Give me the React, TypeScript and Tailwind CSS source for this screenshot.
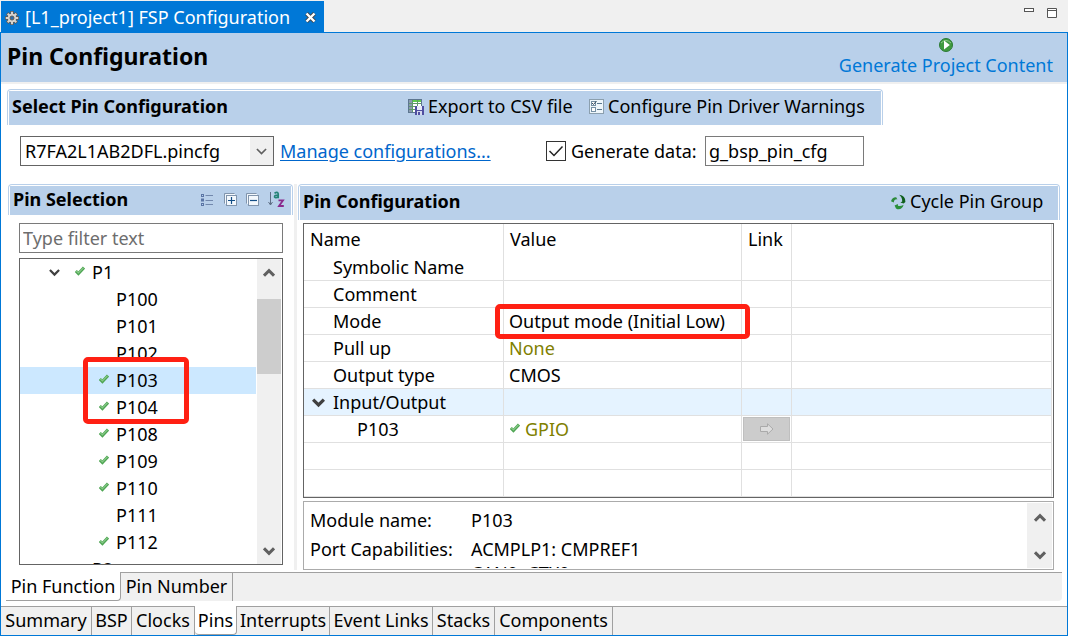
import type { ReactNode } from 'react'

const pins = [
  { name: 'P100', used: false },
  { name: 'P101', used: false },
  { name: 'P102', used: false },
  { name: 'P103', used: true, selected: true },
  { name: 'P104', used: true },
  { name: 'P108', used: true },
  { name: 'P109', used: true },
  { name: 'P110', used: true },
  { name: 'P111', used: false },
  { name: 'P112', used: true },
]

const settings = [
  { name: 'Symbolic Name', value: '' },
  { name: 'Comment', value: '' },
  { name: 'Mode', value: 'Output mode (Initial Low)', marked: true },
  { name: 'Pull up', value: 'None', muted: true },
  { name: 'Output type', value: 'CMOS' },
]

const pageTabs = [
  { name: 'Summary', width: 'w-[91px]' },
  { name: 'BSP', width: 'w-10' },
  { name: 'Clocks', width: 'w-[63px]' },
  { name: 'Pins', width: 'w-[42px]', active: true },
  { name: 'Interrupts', width: 'w-[93px]' },
  { name: 'Event Links', width: 'w-[103px]' },
  { name: 'Stacks', width: 'w-[62px]' },
  { name: 'Components', width: 'w-[118px]' },
]

function Check() {
  return (
    <svg width="10" height="12" viewBox="0 0 10 12" className="shrink-0">
      <path d="M0.8 5 L3.4 7.6 L9 1.6" fill="none" stroke="#4ea553" strokeWidth="3" />
      <path d="M1.2 4.8 L3.4 6.9 L8.6 1.6" fill="none" stroke="#86c886" strokeWidth="1.2" />
    </svg>
  )
}

function Chevron({ up = false, size = 12, color = '#606060', stroke = 3 }) {
  return (
    <svg width={size} height={size} viewBox="0 0 12 12" className="shrink-0">
      <path d={up ? 'M1 8.7 L6 3.7 L11 8.7' : 'M1 3.3 L6 8.3 L11 3.3'} fill="none" stroke={color} strokeWidth={stroke} />
    </svg>
  )
}

function Gear() {
  return (
    <svg width="14" height="14" viewBox="0 0 14 14" className="shrink-0">
      <g stroke="#5f5a55" strokeWidth="3.4">
        <path d="M7 0V14M0 7H14M2.2 2.2L11.8 11.8M11.8 2.2L2.2 11.8" />
      </g>
      <circle cx="7" cy="7" r="5" fill="#5f5a55" />
      <g stroke="#d8d4cf" strokeWidth="2">
        <path d="M7 0.8V13.2M0.8 7H13.2M2.7 2.7L11.3 11.3M11.3 2.7L2.7 11.3" />
      </g>
      <circle cx="7" cy="7" r="4.2" fill="#d8d4cf" />
      <circle cx="7" cy="7" r="2" fill="#2a6fae" stroke="#5f5a55" />
    </svg>
  )
}

function CsvIcon() {
  return (
    <svg width="16" height="16" viewBox="0 0 16 16" className="shrink-0">
      <rect x="0.5" y="0.5" width="13" height="13" fill="#fff" stroke="#5d7690" />
      <rect x="1" y="1" width="12" height="2" fill="#5ecb4c" />
      <rect x="1" y="1" width="3" height="12" fill="#8a9ab0" />
      <path d="M1 4.5H13M1 7.5H13M1 10.5H13M4.5 1V13M9.5 1V13" stroke="#5f9a6a" />
      <rect x="7" y="7" width="9" height="9" fill="#4f4fa0" />
      <rect x="9" y="7" width="5" height="4" fill="#e8ebf8" />
      <rect x="9" y="12" width="5" height="4" fill="#d5d9ee" />
      <rect x="10" y="13" width="2" height="3" fill="#4f4fa0" />
    </svg>
  )
}

function WarningsIcon() {
  return (
    <svg width="15" height="15" viewBox="0 0 15 15" className="shrink-0">
      <rect x="0.5" y="0.5" width="14" height="14" fill="#eef6fb" stroke="#8b9fae" />
      <rect x="2.5" y="2.5" width="4" height="4" fill="#fff" stroke="#7590a5" />
      <rect x="2.5" y="8.5" width="4" height="4" fill="#fff" stroke="#7590a5" />
      <path d="M3 4L4.5 5.5L7.5 2" fill="none" stroke="#30485c" />
      <path d="M8 4.5H13M8 10.5H13" stroke="#5a7890" />
    </svg>
  )
}

function ListIcon() {
  return (
    <svg width="12" height="12" viewBox="0 0 12 12">
      <path d="M4.5 1.5H12M4.5 6.5H12M4.5 10.5H12" stroke="#7288ad" />
      <g fill="#b9d0ea" stroke="#5b75a5">
        <rect x="0.5" y="0.5" width="2" height="2" />
        <rect x="0.5" y="5" width="2" height="2" />
        <rect x="0.5" y="9.5" width="2" height="2" />
      </g>
    </svg>
  )
}

function ExpandIcon({ plus = false }) {
  return (
    <svg width="13" height="13" viewBox="0 0 13 13">
      <path d="M0.5 10.5V0.5H10.5" fill="none" stroke="#8195ad" />
      <path d="M1.5 11V1.5H11" fill="none" stroke="#f3f8fd" />
      <rect x="2.5" y="2.5" width="10" height="10" fill="#f3f8fd" stroke="#8195ad" />
      <path d={plus ? 'M4 7.5H11M7.5 4V11' : 'M4 7.5H11'} stroke="#144f87" strokeWidth="1.2" />
    </svg>
  )
}

function SortIcon() {
  return (
    <svg width="17" height="17" viewBox="0 0 17 17">
      <path d="M2.5 1V14M0.5 11L2.5 14L4.5 11" fill="none" stroke="#5f6f85" />
      <path d="M6.5 2.2Q9.8 0.2 10.2 2.8V7.2M10 4Q6.2 4 6.6 6Q7.6 7.6 10 5.8" fill="none" stroke="#238377" strokeWidth="1.7" />
      <path d="M10.5 9.3H15L11 15H15.8" fill="none" stroke="#8a2b8d" strokeWidth="1.8" />
    </svg>
  )
}

function CycleIcon() {
  return (
    <svg width="15" height="16" viewBox="0 0 15 16" className="shrink-0">
      <path d="M0 7.2Q1.2 3 5.2 3.2L6.4 5.4Q3 5 2.8 8.6Z" fill="#2c8a3a" />
      <path d="M8.2 0.8Q14.6 1.6 14.4 8L12.6 9.6L9.4 8.6L11.2 7.4Q11.4 3.6 8.2 0.8Z" fill="#0f5f1c" />
      <path d="M3.6 11.4L6.8 10L7 11.8Q9.6 12.6 12.6 10.8Q11.4 15.8 6.4 15.2L5 14.6Z" fill="#2a8f3a" />
    </svg>
  )
}

function SectionBar({ title, tall = false, children }: { title: string; tall?: boolean; children: ReactNode }) {
  return (
    <div className="rounded-t-sm border-x border-t border-[#b9d0ea] px-px pt-px">
      <div className={`flex items-center justify-between bg-[#b9d0ea] pl-[3px] ${tall ? 'h-[34px] pb-[3px]' : 'h-[29px] pb-0.5'}`}>
        <h2 className="font-bold">{title}</h2>
        {children}
      </div>
    </div>
  )
}

function PinTree() {
  return (
    <div className="relative min-h-0 flex-1">
      <div className="flex h-full border border-[#646464]">
        <ul className="min-w-0 flex-1 overflow-hidden">
          <li className="flex h-[27px] items-center pb-px pl-[29px]">
            <Chevron size={11} color="#404040" stroke={2.4} />
            <span className="ml-[15px]"><Check /></span>
            <span className="ml-[7px]">P1</span>
          </li>
          {pins.map((pin) => (
            <li key={pin.name} className={`mr-px flex h-[27px] items-center pb-px pl-[79px] ${pin.selected ? 'bg-[#cce8ff]' : ''}`}>
              <span className="w-[17px]">{pin.used && <Check />}</span>
              {pin.name}
            </li>
          ))}
          <li className="flex h-[27px] items-center pb-px pl-[72px]">P2</li>
        </ul>
        <div className="mr-px flex w-6 flex-col items-center bg-[#f0f0f0] pt-2 pb-[7px]">
          <Chevron up />
          <div className="mt-5 h-[75px] w-full bg-[#cdcdcd]" />
          <span className="mt-auto flex"><Chevron /></span>
        </div>
      </div>
      <div className="absolute top-[99px] left-16 h-[67px] w-[106px] rounded-[5px] border-5 border-[#ff2013]" />
    </div>
  )
}

function SettingsTable() {
  const cell = 'h-[27px] border-r border-b border-[#e0e0e0] p-0'
  return (
    <div className="border border-[#646464] pr-px">
      <table className="w-full table-fixed border-separate border-spacing-0 text-left">
        <colgroup>
          <col className="w-[200px]" />
          <col className="w-[238px]" />
          <col className="w-[50px]" />
          <col />
        </colgroup>
        <thead>
          <tr className="h-[30px]">
            <th className="border-r border-[#e0e0e0] p-0 pl-1.5 font-normal">Name</th>
            <th className="border-r border-[#e0e0e0] p-0 pl-1.5 font-normal">Value</th>
            <th className="border-r border-[#e0e0e0] p-0 pl-1.5 font-normal">Link</th>
            <th className="border-r border-[#e0e0e0] p-0" />
          </tr>
        </thead>
        <tbody>
          {settings.map((row) => (
            <tr key={row.name}>
              <td className={`${cell} pl-[29px]`}><div className="h-[26px] leading-[26px]">{row.name}</div></td>
              <td className={`${cell} pl-[5px]`}>
                <div className={`relative h-[26px] leading-[26px] ${row.muted ? 'text-[#808000]' : ''}`}>
                  {row.value}
                  {row.marked && (
                    <span className="absolute -top-1 -left-3.5 h-[35px] w-[255px] rounded-[5px] border-5 border-[#ff2013]" />
                  )}
                </div>
              </td>
              <td className={cell} />
              <td className={cell} />
            </tr>
          ))}
          <tr className="bg-[#e5f3ff]">
            <td className={`${cell} pl-2`}>
              <div className="flex h-[26px] items-center gap-2">
                <Chevron size={13} color="#404040" />
                Input/Output
              </div>
            </td>
            <td className={cell} />
            <td className={cell} />
            <td className={cell} />
          </tr>
          <tr>
            <td className={`${cell} pl-[53px]`}><div className="h-[26px] leading-[26px]">P103</div></td>
            <td className={`${cell} pl-1.5`}>
              <div className="flex h-[26px] items-center gap-[5px] text-[#808000]">
                <Check />
                GPIO
              </div>
            </td>
            <td className={`${cell} px-px`}>
              <button type="button" disabled aria-label="Open link" className="flex h-6 w-full items-center justify-center border border-[#bfbfbf] bg-[#cccccc]">
                <svg width="14" height="12" viewBox="0 0 14 12">
                  <path d="M0.5 3.5H7.5V0.8L13 6L7.5 11.2V8.5H0.5Z" fill="#dedede" stroke="#aaa" />
                </svg>
              </button>
            </td>
            <td className={cell} />
          </tr>
          {[0, 1].map((i) => (
            <tr key={i}>
              <td className={cell} />
              <td className={cell} />
              <td className={cell} />
              <td className={cell} />
            </tr>
          ))}
        </tbody>
      </table>
    </div>
  )
}

function ModuleInfo() {
  return (
    <div className="flex min-h-0 flex-1 border border-[#ababab] p-px">
      <dl className="grid min-w-0 flex-1 grid-cols-[161px_1fr] content-start gap-y-[5px] overflow-hidden pt-[5px] pl-[5px] leading-6">
        <dt>Module name:</dt>
        <dd>P103</dd>
        <dt>Port Capabilities:</dt>
        <dd>
          <div>ACMPLP1: CMPREF1</div>
          <div>CAN0: CTX0</div>
        </dd>
      </dl>
      <div className="flex w-[25px] flex-col items-center justify-between bg-[#f0f0f0] pt-[9px] pb-[7px]">
        <Chevron up />
        <Chevron />
      </div>
    </div>
  )
}

export default function App() {
  return (
    <div className="flex h-screen flex-col overflow-hidden bg-[#f0f0f0] font-['Noto_Sans','Open_Sans',sans-serif] text-[18px] leading-[27px] text-black">
      <header className="flex h-8 items-end justify-between pl-px">
        <div className="flex h-[31px] w-[323px] items-center bg-[#0078d7] pt-0.5 pl-1 text-white">
          <Gear />
          <span className="ml-1.5 flex-1 whitespace-nowrap">[L1_project1] FSP Configuration</span>
          <button type="button" aria-label="Close" className="mr-2">
            <svg width="11" height="11" viewBox="0 0 11 11">
              <path d="M1.5 1.5L9.5 9.5M9.5 1.5L1.5 9.5" stroke="#444" strokeWidth="4" />
              <path d="M1.5 1.5L9.5 9.5M9.5 1.5L1.5 9.5" stroke="#fff" strokeWidth="2.4" />
            </svg>
          </button>
        </div>
        <div className="mr-[11px] flex gap-3 self-start pt-2">
          <button type="button" aria-label="Minimize" className="flex">
            <svg width="11" height="10" viewBox="0 0 11 10">
              <rect x="0.5" y="0.5" width="9" height="3" fill="#fff" stroke="#555" />
            </svg>
          </button>
          <button type="button" aria-label="Maximize" className="flex">
            <svg width="10" height="10" viewBox="0 0 10 10">
              <path d="M0.5 0.5H9.5V9.5H0.5ZM0.5 2.5H9.5" fill="#fff" stroke="#555" />
            </svg>
          </button>
        </div>
      </header>

      <main className="flex min-h-0 flex-1 flex-col border border-[#0078d7] bg-white">
        <div className="flex h-[51px] shrink-0 items-center justify-between border-b-2 border-[#f0f0f0] bg-[#b9d0ea] pr-3.5 pl-1.5">
          <h1 className="pb-0.5 text-[23px] font-bold">Pin Configuration</h1>
          <button type="button" className="flex flex-col items-center pt-px text-[#0078d7]">
            <svg width="14" height="14" viewBox="0 0 14 14">
              <circle cx="7" cy="7" r="6.5" fill="#3f9a3f" stroke="#2c7a35" />
              <path d="M2 5Q7 0 12 5" fill="none" stroke="#8fc98b" />
              <path d="M5 2.4L10.8 7L5 11.6Z" fill="#fff" />
            </svg>
            Generate Project Content
          </button>
        </div>

        <div className="mx-1.5 mt-[5px] w-[876px] max-w-full">
          <SectionBar title="Select Pin Configuration" tall>
            <div className="flex gap-3 pr-2.5">
              <button type="button" className="flex w-[169px] items-center gap-1">
                <CsvIcon />
                Export to CSV file
              </button>
              <button type="button" className="flex w-[282px] items-center gap-1">
                <WarningsIcon />
                Configure Pin Driver Warnings
              </button>
            </div>
          </SectionBar>
        </div>

        <div className="mt-[11px] flex h-[30px] shrink-0 items-center pl-[19px]">
          <div className="relative h-full w-[254px]">
            <select aria-label="Pin configuration file" className="h-full w-full appearance-none border border-[#646464] bg-white pl-1">
              <option>R7FA2L1AB2DFL.pincfg</option>
            </select>
            <span className="pointer-events-none absolute top-px right-px bottom-px flex w-[23px] items-center justify-center bg-[#f0f0f0]">
              <Chevron size={11} stroke={1.8} />
            </span>
          </div>
          <a href="#manage" className="ml-1.5 w-[211px] text-[#0066cc] underline underline-offset-2">Manage configurations...</a>
          <label className="ml-[55px] flex items-center gap-[5px]">
            <span className="relative flex">
              <input type="checkbox" defaultChecked className="size-5 appearance-none border border-[#333] bg-white" />
              <svg width="20" height="20" viewBox="0 0 20 20" className="pointer-events-none absolute inset-0">
                <path d="M3.5 10L8 14.5L16.5 5.5" fill="none" stroke="#222" strokeWidth="1.5" />
              </svg>
            </span>
            <span className="w-[129px]">Generate data:</span>
          </label>
          <input aria-label="Generated data name" defaultValue="g_bsp_pin_cfg" className="ml-[5px] h-full w-[159px] border border-[#7a7a7a] pl-[3px]" />
        </div>

        <div className="mt-[18px] flex min-h-0 flex-1 pr-[7px] pl-[7px]">
          <section className="flex w-[285px] shrink-0 flex-col pb-[5px]">
            <SectionBar title="Pin Selection">
              <div className="flex items-center gap-[9px] pr-1.5">
                <button type="button" aria-label="List" className="mr-0.5"><ListIcon /></button>
                <button type="button" aria-label="Expand all"><ExpandIcon plus /></button>
                <button type="button" aria-label="Collapse all"><ExpandIcon /></button>
                <button type="button" aria-label="Sort"><SortIcon /></button>
              </div>
            </SectionBar>
            <div className="flex min-h-0 flex-1 flex-col gap-[5px] pt-2 pr-2.5 pl-[11px]">
              <input aria-label="Filter" placeholder="Type filter text" className="h-[30px] shrink-0 border border-[#7a7a7a] pl-[3px] placeholder:text-[#6d6d6d]" />
              <PinTree />
            </div>
          </section>

          <div className="mr-px ml-px w-[3px] shrink-0 bg-[#f0f0f0]" />

          <section className="flex min-w-0 flex-1 flex-col">
            <SectionBar title="Pin Configuration" tall>
              <button type="button" className="mr-2.5 flex w-[157px] items-center gap-1">
                <CycleIcon />
                Cycle Pin Group
              </button>
            </SectionBar>
            <div className="flex min-h-0 flex-1 flex-col gap-[3px] pt-[3px] pr-1.5 pl-[5px]">
              <SettingsTable />
              <ModuleInfo />
            </div>
          </section>
        </div>

        <nav className="mx-[5px] mt-0.5 flex h-[29px] shrink-0 rounded-br-sm bg-[#f0f0f0]">
          <button type="button" className="w-[115px] rounded-br-sm border-r border-b border-[#a0a0a0] bg-white whitespace-nowrap">Pin Function</button>
          <button type="button" className="w-[112px] border-t border-r border-[#a0a0a0] pb-0.5 whitespace-nowrap">Pin Number</button>
          <div className="flex-1 border-t border-[#a0a0a0]" />
        </nav>

        <nav className="mt-[5px] flex h-[29px] shrink-0 bg-[#f0f0f0]">
          {pageTabs.map((tab) => (
            <button
              key={tab.name}
              type="button"
              className={`${tab.width} whitespace-nowrap border-r border-[#a0a0a0] ${tab.active ? 'rounded-b-sm border-b bg-white' : 'border-t pb-0.5'}`}
            >
              {tab.name}
            </button>
          ))}
          <div className="flex-1 border-t border-[#a0a0a0]" />
        </nav>
      </main>
    </div>
  )
}
